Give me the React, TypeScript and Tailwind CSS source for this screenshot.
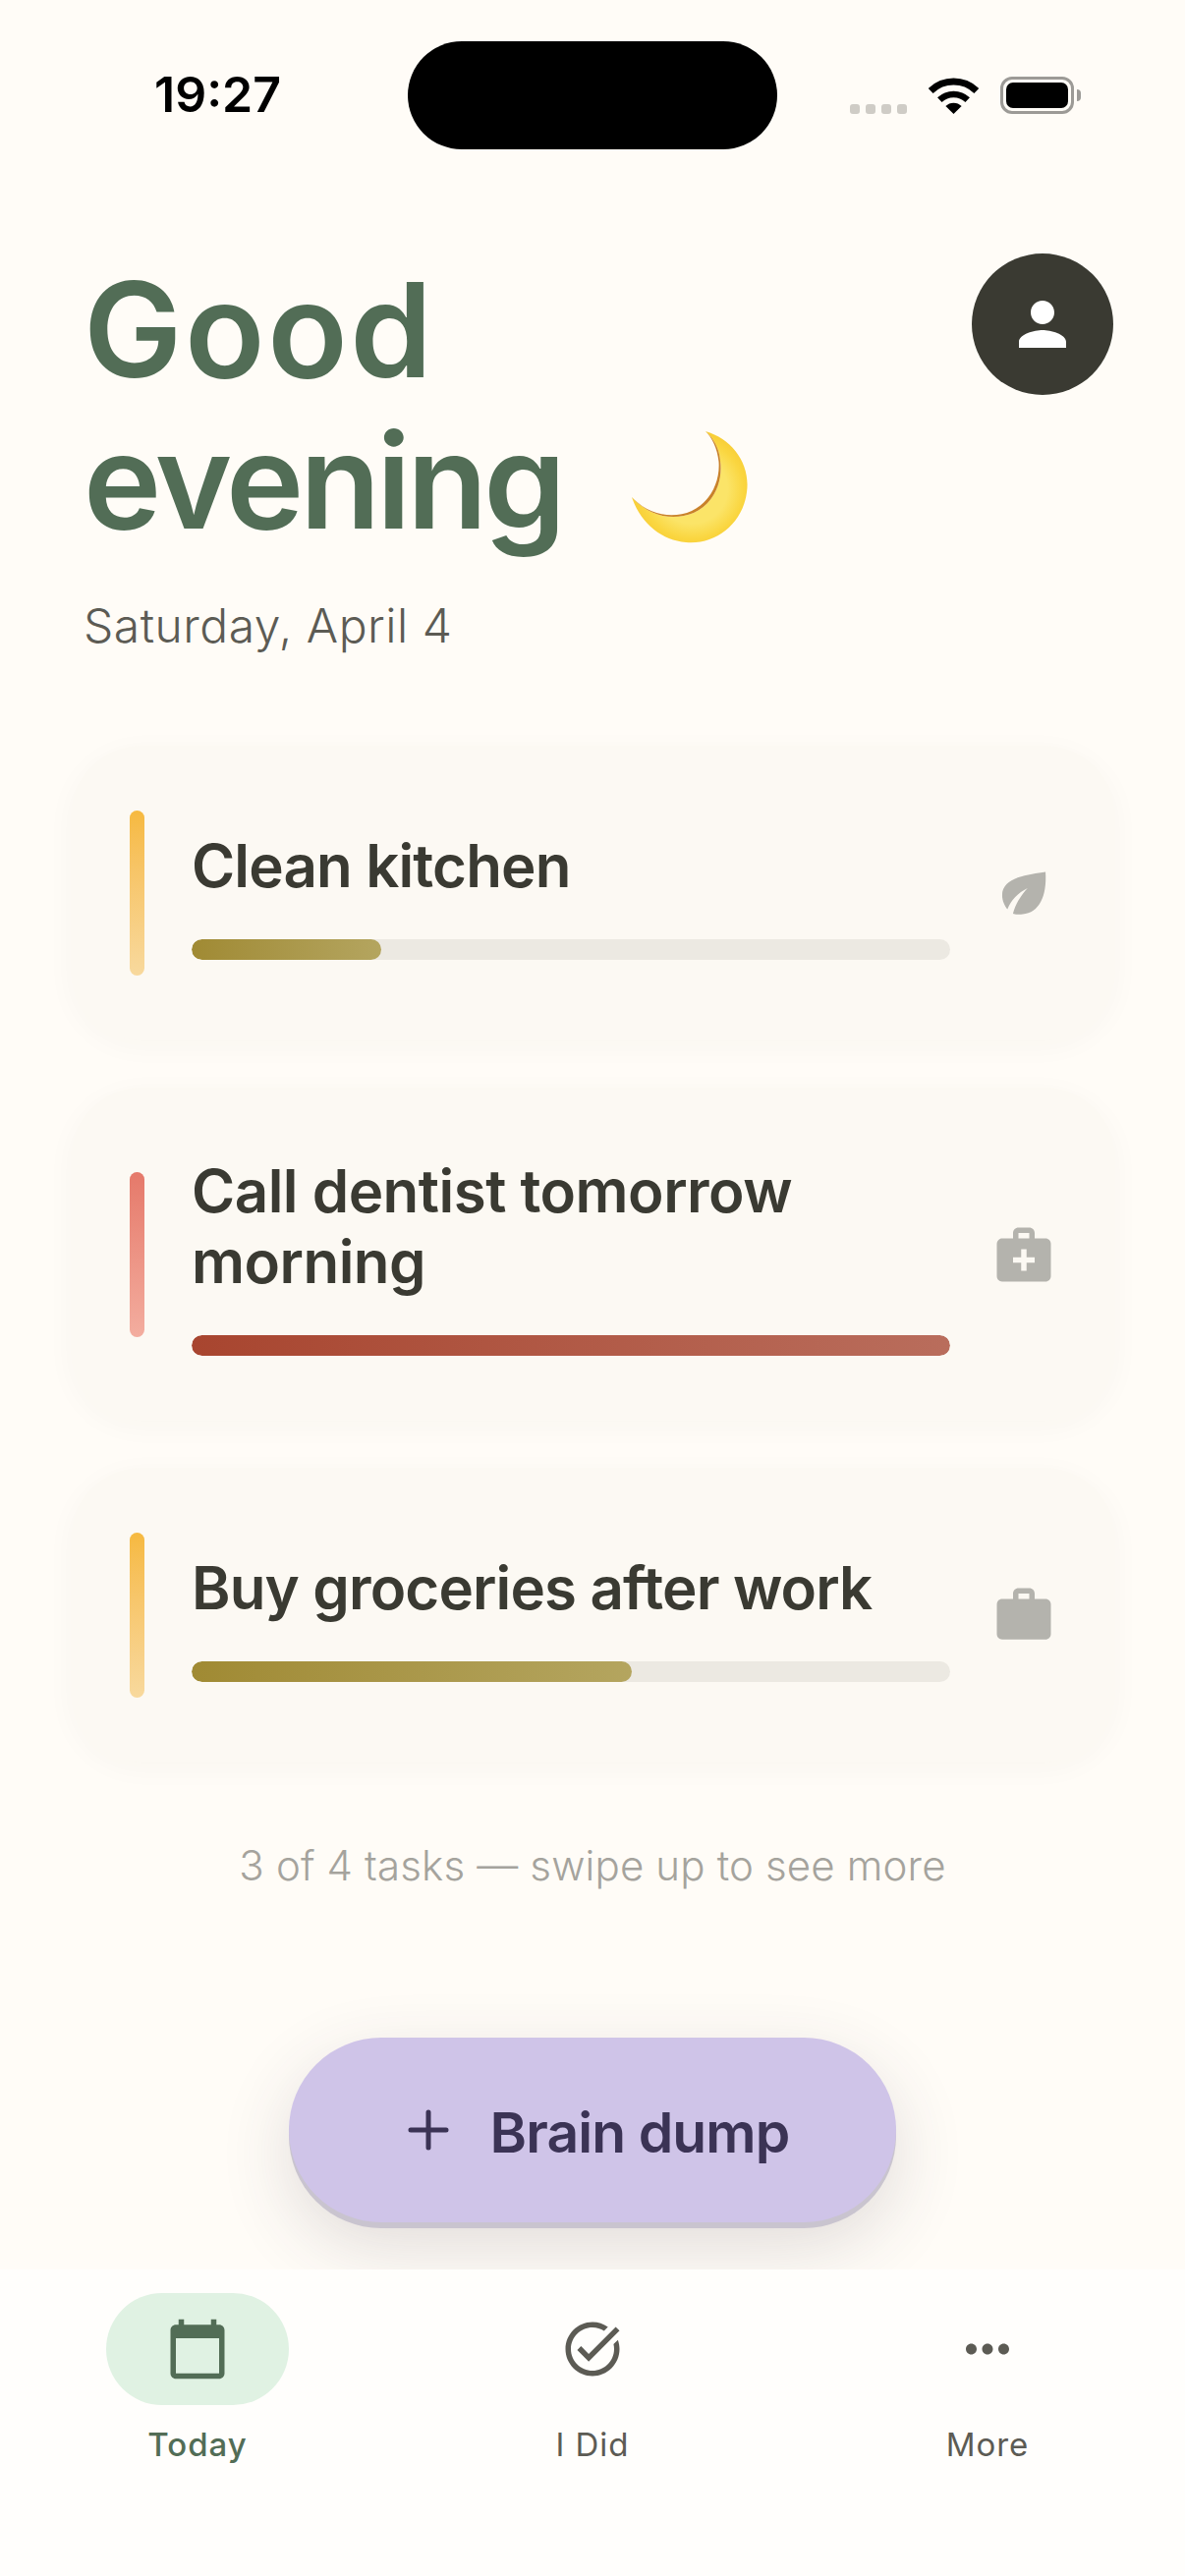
import React from "react";

const MED = "M20 6h-4V4c0-1.1-.9-2-2-2h-4c-1.1 0-2 .9-2 2v2H4c-1.1 0-2 .9-2 2v12c0 1.1.9 2 2 2h16c1.1 0 2-.9 2-2V8c0-1.1-.9-2-2-2zM10 4h4v2h-4V4zm6 11h-3v3h-2v-3H8v-2h3v-3h2v3h3v2z";
const WORK = "M20 6h-4V4c0-1.11-.89-2-2-2h-4c-1.11 0-2 .89-2 2v2H4c-1.11 0-1.99.89-1.99 2L2 19c0 1.11.89 2 2 2h16c1.11 0 2-.89 2-2V8c0-1.11-.89-2-2-2zm-6 0h-4V4h4v2z";

function MatIcon({ d, className }: { d: string; className?: string }) {
  return (
    <svg viewBox="0 0 24 24" className={className} fill="currentColor">
      <path d={d} />
    </svg>
  );
}

function Leaf() {
  return (
    <svg viewBox="180 115 187 180" className="w-[62px] h-[60px] text-[#b4b3ad]" fill="currentColor">
      <path d="M340 140 C 290 148 207 155 207 212 C 207 230 215 245 223 255 C 235 225 255 205 285 190 C 262 215 248 240 240 268 C 250 271 260 271 270 270 C 320 265 345 215 340 140 Z" />
    </svg>
  );
}

function Moon() {
  return (
    <svg viewBox="0 0 125 125" className="w-[125px] h-[125px] shrink-0">
      <defs>
        <radialGradient id="moonFill" cx="0.52" cy="0.52" r="0.62">
          <stop offset="0.5" stopColor="#fbe468" />
          <stop offset="0.72" stopColor="#fad640" />
          <stop offset="1" stopColor="#f5c42c" />
        </radialGradient>
      </defs>
      <path
        d="M76 4 C 104 12 122 38 118 66 C 114 98 86 120 56 117 C 32 115 10 98 1 71 C 18 90 42 96 64 87 C 84 78 94 56 91 34 C 90 21 84 11 76 4 Z"
        fill="url(#moonFill)"
      />
      <path
        d="M76 4 C 84 11 90 21 91 34 C 94 56 84 78 64 87 C 42 96 18 90 1 71 C 18 89 42 94 62 85 C 81 76 91 55 89.5 35 C 88 21 83 11 76 4 Z"
        fill="#c9822a"
      />
    </svg>
  );
}

function StatusIcons() {
  return (
    <div className="flex items-start ml-[74px] mt-[36px]">
      <div className="flex gap-[6px] mt-[28px]">
        <span className="w-[10px] h-[10px] rounded-[3px] bg-[#cfccc6]" />
        <span className="w-[10px] h-[10px] rounded-[3px] bg-[#cfccc6]" />
        <span className="w-[10px] h-[10px] rounded-[3px] bg-[#cfccc6]" />
        <span className="w-[10px] h-[10px] rounded-[3px] bg-[#cfccc6]" />
      </div>
      <svg viewBox="0 0 51 37" className="w-[51px] h-[37px] ml-[22px] mt-px">
        <path d="M2.2 13.5 A 33.5 33.5 0 0 1 48.8 13.5" fill="none" stroke="#000" strokeWidth="7" />
        <path d="M11.3 22.6 A 20.5 20.5 0 0 1 39.7 22.6" fill="none" stroke="#000" strokeWidth="6.5" />
        <path d="M25.5 37 L 17.4 29 A 11.5 11.5 0 0 1 33.6 29 Z" fill="#000" />
      </svg>
      <div className="ml-[22px] w-[75px] h-[38px] rounded-[12px] border-[3px] border-[#9c9a96] p-[3px]">
        <div className="w-full h-full rounded-[7px] bg-black" />
      </div>
      <div className="w-[4px] h-[12px] mt-[13px] ml-[3px] rounded-r-[4px] bg-[#9c9a96]" />
    </div>
  );
}

type Task = {
  title: string;
  tracking: string;
  bar: string;
  fill: string;
  pct: number;
  icon: React.ReactNode;
};

const tasks: Task[] = [
  {
    title: "Clean kitchen",
    tracking: "tracking-[-0.85px]",
    bar: "bg-linear-to-b from-[#f6b93f] to-[#f8d99d]",
    fill: "bg-linear-to-r from-[#a08a33] to-[#b4a55f]",
    pct: 25,
    icon: <Leaf />,
  },
  {
    title: "Call dentist tomorrow morning",
    tracking: "tracking-[-0.5px]",
    bar: "bg-linear-to-b from-[#e5796a] to-[#f3ad9f]",
    fill: "bg-linear-to-r from-[#a8452f] to-[#b96d5c]",
    pct: 100,
    icon: <MatIcon d={MED} className="w-[66px] h-[66px] text-[#b4b3ad]" />,
  },
  {
    title: "Buy groceries after work",
    tracking: "tracking-[-0.85px]",
    bar: "bg-linear-to-b from-[#f6b93f] to-[#f8d99d]",
    fill: "bg-linear-to-r from-[#a08a33] to-[#b4a55f]",
    pct: 58,
    icon: <MatIcon d={WORK} className="w-[66px] h-[66px] text-[#b4b3ad]" />,
  },
];

function TaskCard({ task }: { task: Task }) {
  return (
    <div className="flex items-center rounded-[72px] bg-[#fcf9f3] py-[66px] pl-[60px] pr-[60px] shadow-[0_6px_30px_rgba(60,50,30,0.03)]">
      <div className={`w-[15px] h-[168px] shrink-0 rounded-full ${task.bar}`} />
      <div className="flex-1 ml-[48px] mr-[42px]">
        <div className={`pt-[3px] text-[60px] leading-[72px] font-semibold text-[#3a3a32] ${task.tracking}`}>{task.title}</div>
        <div className="mt-[39px] h-[21px] rounded-full bg-[#ece9e2] overflow-hidden">
          <div className={`h-full rounded-full ${task.fill}`} style={{ width: `${task.pct}%` }} />
        </div>
      </div>
      <div className="w-[66px] flex justify-center shrink-0">{task.icon}</div>
    </div>
  );
}

function NavItem({ label, icon, active }: { label: string; icon: React.ReactNode; active?: boolean }) {
  return (
    <div className="flex flex-col items-center">
      <div className={`w-[186px] h-[114px] rounded-full flex items-center justify-center ${active ? "bg-[#e0f2e3] text-[#526d56]" : "text-[#5c5b54]"}`}>
        {icon}
      </div>
      <div className={`mt-[16px] text-[33px] leading-[48px] tracking-[1px] ${active ? "font-medium text-[#526d56]" : "font-normal text-[#5c5b54]"}`}>
        {label}
      </div>
    </div>
  );
}

export default function App() {
  return (
    <div className="w-[1206px] h-[2622px] flex flex-col bg-[#fffcf7] overflow-hidden font-['Inter',sans-serif]">
      <div className="flex items-start pt-[42px] pl-[157px] h-[258px] shrink-0">
        <div className="w-[130px] mt-[26px] text-[50px] leading-[56px] font-semibold text-black whitespace-nowrap">19:27</div>
        <div className="w-[376px] h-[110px] rounded-[55px] bg-black ml-[128px]" />
        <StatusIcons />
      </div>

      <div className="flex justify-between items-start pl-[85px] pr-[73px] h-[501px] shrink-0">
        <div>
          <h1 className="text-[134px] leading-[154px] font-semibold tracking-[2.6px] text-[#526d56]">Good</h1>
          <div className="flex items-start h-[154px]">
            <span className="text-[134px] leading-[154px] font-semibold tracking-[-4px] text-[#526d56]">evening</span>
            <div className="ml-[70px] mt-[23px]">
              <Moon />
            </div>
          </div>
          <div className="mt-[39px] text-[48px] leading-[64px] font-light tracking-[0.5px] text-[#5c5b54]">Saturday, April 4</div>
        </div>
        <div className="w-[144px] h-[144px] rounded-full bg-[#3a3a32] flex items-center justify-center">
          <MatIcon d="M12 12c2.21 0 4-1.79 4-4s-1.79-4-4-4-4 1.79-4 4 1.79 4 4 4zm0 2c-2.67 0-8 1.34-8 4v2h16v-2c0-2.66-5.33-4-8-4z" className="w-[72px] h-[72px] text-white" />
        </div>
      </div>

      <div className="flex flex-col gap-[48px] mx-[72px] w-[1063px] shrink-0">
        {tasks.map((t, i) => (
          <TaskCard key={i} task={t} />
        ))}
      </div>

      <div className="mt-[77px] text-center text-[42px] leading-[56px] font-light text-[#a5a39d] tracking-[0.15px]">
        3 of 4 tasks — swipe up to see more
      </div>

      <div className="flex justify-center mt-[147px]">
        <div className="w-[618px] h-[188px] rounded-full bg-[#cfc4e8] flex items-center justify-center gap-[42px] pl-[12px] shadow-[0_6px_0_#c9c4cf,0_24px_72px_rgba(60,50,70,0.16)]">
          <svg viewBox="0 0 42 42" className="w-[42px] h-[42px] text-[#3b3355]" fill="none" stroke="currentColor" strokeWidth="5" strokeLinecap="round">
            <path d="M21 3v36M3 21h36" />
          </svg>
          <span className="mt-[6px] text-[57px] leading-[72px] font-semibold tracking-[-0.9px] text-[#3b3355]">Brain dump</span>
        </div>
      </div>

      <div className="relative mt-[48px] flex-1 grid grid-cols-3 pt-[24px] bg-[#fffefc]/95">
        <NavItem
          active
          label="Today"
          icon={<MatIcon d="M20 3h-1V1h-2v2H7V1H5v2H4c-1.1 0-2 .9-2 2v16c0 1.1.9 2 2 2h16c1.1 0 2-.9 2-2V5c0-1.1-.9-2-2-2zm0 18H4V8h16v13z" className="w-[66px] h-[66px]" />}
        />
        <NavItem
          label="I Did"
          icon={<MatIcon d="M22 5.18 10.59 16.6l-4.24-4.24 1.41-1.41 2.83 2.83 10-10L22 5.18zm-2.21 5.04c.13.57.21 1.17.21 1.78 0 4.42-3.58 8-8 8s-8-3.58-8-8 3.58-8 8-8c1.58 0 3.04.46 4.28 1.25l1.44-1.44C16.1 2.67 14.13 2 12 2 6.48 2 2 6.48 2 12s4.48 10 10 10 10-4.48 10-10c0-1.19-.22-2.33-.6-3.39l-1.61 1.61z" className="w-[66px] h-[66px]" />}
        />
        <NavItem
          label="More"
          icon={<MatIcon d="M6 10c-1.1 0-2 .9-2 2s.9 2 2 2 2-.9 2-2-.9-2-2-2zm12 0c-1.1 0-2 .9-2 2s.9 2 2 2 2-.9 2-2-.9-2-2-2zm-6 0c-1.1 0-2 .9-2 2s.9 2 2 2 2-.9 2-2-.9-2-2-2z" className="w-[66px] h-[66px]" />}
        />
      </div>
    </div>
  );
}
